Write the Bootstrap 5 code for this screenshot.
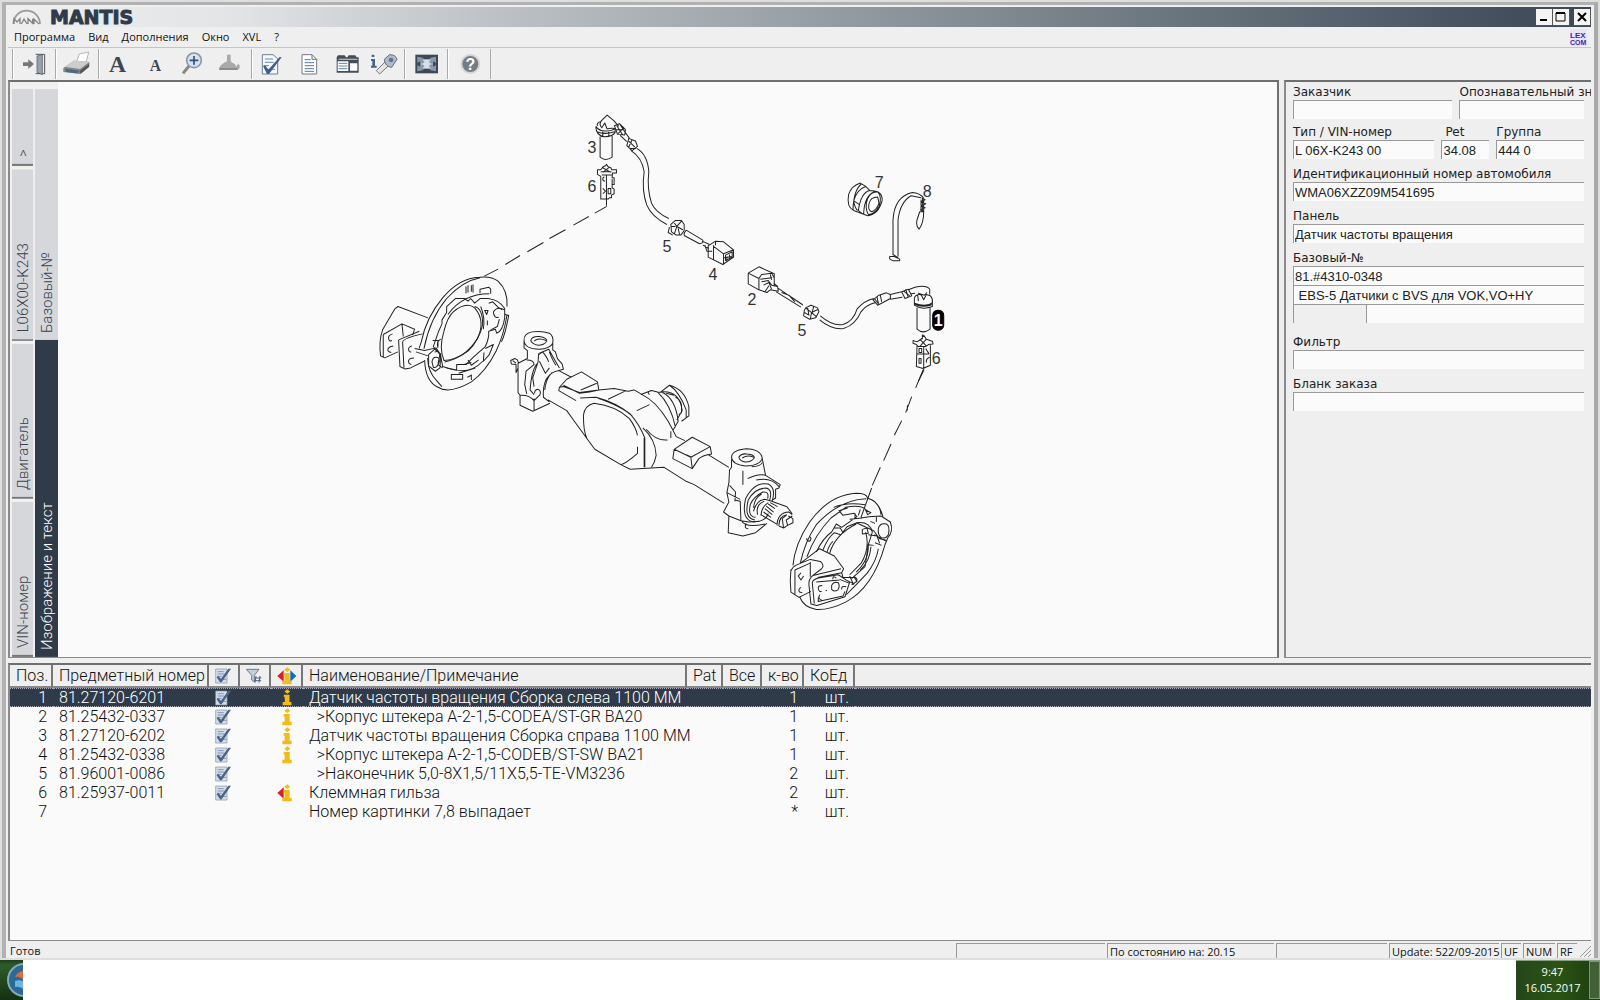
<!DOCTYPE html>
<html lang="ru">
<head>
<meta charset="utf-8">
<meta name="viewport" content="width=device-width, initial-scale=1">
<title>MANTIS</title>
<link href="https://cdn.jsdelivr.net/npm/bootstrap@5.3.0/dist/css/bootstrap.min.css" rel="stylesheet">
<style>
:root{--navy:#2f3b49;--face:#efefef;--paper:#fafafa;--edge:#6f6f6f;--tab:#d6d7db}
body{font-family:"Open Sans","Noto Sans",sans-serif;font-size:11px;line-height:16px;color:#111;background:#fff}
button{border:0;background:none;padding:0;color:inherit}
.app-window{background:var(--face);border:6px solid #b1b1b1;border-top-width:5px;border-right-color:#a9a9a9;border-bottom:0;outline:2px solid #dedede;outline-offset:-2px;padding:2px 3px 0 2px}
.title-strip{height:20px;background:linear-gradient(90deg,#efefef 0,#e2e4e6 14%,#bfc3c7 30%,#98a0a7 50%,#65717b 76%,#3a4754 100%)}
.brand{font:700 19px/20px "DejaVu Sans",sans-serif;color:var(--navy);-webkit-text-stroke:1px var(--navy)}
.win-btn{width:17px;height:17px;background:#f4f4f4;border-right:1px solid #555;border-bottom:1px solid #555}
.menu-strip{height:21px;padding-left:6px;border-bottom:1px solid #c4c4c4}
.menu-strip button{margin-right:13px}
.tool-strip{height:32px;padding:1px 0 0 4px}
.tool-set{border-left:1px solid #aaa;height:30px;box-shadow:inset 1px 0 #fff}
.tool-set:last-child{border-right:1px solid #aaa}
.tool-set button{width:38px;height:30px}
.tool-set.solo button{width:42px}
.tool-set svg{width:28px;height:26px;display:block;margin:auto}
.sunk{border-top:2px solid var(--edge);border-left:2px solid #8a8a8a;border-bottom:1px solid #8a8a8a}
.work{gap:5px;flex:1 1 577px}
.view-pane{background:var(--paper);border-right:2px solid var(--edge)}
.tab-col{padding-top:4px;background:var(--face)}
.tab-col.outer{padding-left:2px;padding-right:2px}
.tab-v{writing-mode:vertical-rl;text-orientation:sideways;transform:rotate(180deg);background:var(--tab);color:#3a414b;font:300 15px/20px Roboto,"Open Sans",sans-serif;text-align:left;padding-top:7px;width:21px;border-top:2px solid #777;border-bottom:3px solid #f2f2f2;min-height:0;white-space:nowrap}
.tab-v.wide{width:23px;border-top:0}
.tab-v.on{background:var(--navy);color:#fff;border:0}
.canvas-pane svg{width:100%;height:100%;display:block}
.info-pane{width:307px;padding-left:7px;padding-right:7px;overflow:hidden}
.info-pane label{display:block;height:18px;line-height:20px;font-family:"DejaVu Sans",sans-serif;font-size:12px;color:#222;white-space:nowrap}
.fld{display:block;width:100%;height:19px;border:0;border-top:1px solid #999;border-left:1px solid #999;background:#fbfbfb;font:13px/17px "Liberation Sans",sans-serif;color:#222;padding:0 1px;border-radius:0}
.gap-s{margin-bottom:3px}.gap-m{margin-bottom:5px}.gap-l{margin-bottom:9px}
.parts{flex:0 0 278px;background:var(--paper);margin-top:5px}
.parts table{width:100%;table-layout:fixed;border-collapse:separate;border-spacing:0;font:300 16px/19px Roboto,"Open Sans",sans-serif;color:#111}
.parts th{height:23px;font-weight:300;background:var(--face);border-right:2px solid #777;border-bottom:2px solid #888;padding:0 0 0 6px;white-space:nowrap;overflow:hidden}
.parts th:last-child{border-right:0}
.parts td{height:19px;padding:0 0 0 6px;white-space:pre}
.parts svg{display:block}
.parts .num{text-align:right;padding-right:6px}
.parts .unit{text-align:right;padding-right:6px}
.parts tr.sel td{background:var(--navy);color:#fff;border-top:1px dotted #aab;border-bottom:1px dotted #aab;line-height:17px}
.status{height:19px;padding-left:2px;gap:2px}
.status-box{height:16px;border-top:1px solid #999;border-left:1px solid #999;padding-left:2px;line-height:15px;white-space:nowrap}
.w-a{width:149px}.w-b{width:167px}.w-c{width:111px}.w-d{width:110px}.w-e{width:20px}.w-f{width:32px}.w-g{width:20px}
.taskbar{height:40px;background:#fff}
.start{width:23px;background:linear-gradient(#1c3c1a,#2f5c2c 12%,#143012);overflow:hidden}
.clock{width:84px;background:linear-gradient(90deg,#24461a,#2b5413 50%,#1b3b12);color:#fff;border-top:1px solid #8aa082}
.clock-text{padding-top:3px}
.peek{width:11px;height:38px;border:1px solid #7d9673;background:#426038}
</style>
<script src="https://cdn.jsdelivr.net/npm/bootstrap@5.3.0/dist/js/bootstrap.bundle.min.js"></script>
</head>
<body class="d-flex flex-column min-vh-100">
<svg width="0" height="0" class="position-absolute" aria-hidden="true">
 <symbol id="chk" viewBox="0 0 48 48"><path d="M2 3h34v42H2z" fill="#d3deea" stroke="#8793a3" stroke-width="2"/><path d="M8 11h18M8 18h20M8 25h12M24 34h10" stroke="#7f96b5" stroke-width="3"/><path d="M9 23l9 9L40 2h8L20 43h-5L5 28z" fill="#4a6488"/></symbol>
 <symbol id="inf" viewBox="0 0 60 54"><path d="M22 8l9-7 9 7-9 7zM20 18h18v23h6v11H16V41h7V26h-3z" fill="#f2bb19"/></symbol>
</svg>
<div class="app-window d-flex flex-column flex-grow-1">
 <header class="title-strip d-flex align-items-center">
  <svg width="30" height="18" viewBox="0 0 90 54" class="ms-1 me-2" fill="none"><path d="M4 48A40 40 0 0 1 84 48" stroke="#999" stroke-width="5"/><path d="M6 48V32l9 10 9-10v16M28 48l8-15 9 15M48 48V32l14 14V32M66 48V33l15 15" stroke="#858585" stroke-width="4"/></svg>
  <span class="brand flex-grow-1">MANTIS</span>
  <button class="win-btn" aria-label="Свернуть"><svg width="15" height="15" class="d-block"><path d="M4 11h7" stroke="#000" stroke-width="2"/></svg></button>
  <button class="win-btn" aria-label="Развернуть"><svg width="15" height="15" class="d-block"><path d="M3 4h9v8H3z" fill="none" stroke="#000"/><path d="M3 4h9" stroke="#000" stroke-width="2"/></svg></button>
  <button class="win-btn ms-1" aria-label="Закрыть"><svg width="15" height="15" class="d-block"><path d="M4 4l8 8M12 4l-8 8" stroke="#000" stroke-width="2"/></svg></button>
 </header>
 <nav class="menu-strip d-flex align-items-center">
  <button>Программа</button><button>Вид</button><button>Дополнения</button><button>Окно</button><button>XVL</button><button>?</button>
  <svg class="ms-auto me-1" width="17" height="17" viewBox="0 0 17 17"><path d="M0 0h17v17H0z" fill="#e8e4f2"/><g font-family="Liberation Sans, sans-serif" font-weight="700" font-size="8" fill="#4a22b8"><text x="0" y="9">LEX</text><text x="0" y="16" font-size="7">COM</text></g></svg>
 </nav>
 <div class="tool-strip d-flex" role="toolbar">
  <div class="tool-set solo"><button aria-label="Выход"><svg viewBox="57 153 84 78"><path d="M104 163h27v58h-27" fill="#e8ebee" stroke="#555" stroke-width="3"/><path d="M108 168l16-4v60l-16-7z" fill="#96a2ae" stroke="#4c545c" stroke-width="2"/><path d="M66 187h16v-9l17 14-17 15v-9H66z" fill="#777"/></svg></button></div>
  <div class="tool-set solo"><button aria-label="Печать"><svg viewBox="183 153 84 78"><path d="M222 190l10-28 28-6-8 32z" fill="#fff" stroke="#999" stroke-width="2"/><path d="M184 204l32-22 46 4v14l-28 22-50-6z" fill="#858585"/><path d="M187 200l30-19 44 6-27 20z" fill="#cdcdcd"/><path d="M190 206l42 6-6 8-34-4z" fill="#4a6a84"/><path d="M234 212l27-20v8l-25 22z" fill="#555"/></svg></button></div>
  <div class="tool-set d-flex">
   <button aria-label="Крупный шрифт"><svg viewBox="309 153 84 78"><text x="350" y="215" text-anchor="middle" font-family="Liberation Serif, serif" font-weight="700" font-size="71" fill="#3c4652">A</text></svg></button>
   <button aria-label="Мелкий шрифт"><svg viewBox="423 153 84 78"><text x="463" y="214" text-anchor="middle" font-family="Liberation Serif, serif" font-weight="700" font-size="47" fill="#3c4652">A</text></svg></button>
   <button aria-label="Увеличить"><svg viewBox="541 153 84 78"><path d="M568 198l-18 22" stroke="#8a8580" stroke-width="9"/><circle cx="583" cy="181" r="22" fill="#d5e4f2" stroke="#8996a5" stroke-width="5"/><path d="M570 181h26M583 168v26" stroke="#335078" stroke-width="5"/></svg></button>
   <button aria-label="Лампа"><svg viewBox="650 153 84 78"><path d="M677 164h11v20q2 4 12 8l6 8q2-10 8-6 4 8-4 16H654q-4-14 23-26z" fill="#aaa"/><path d="M654 207h54" stroke="#8c8c8c" stroke-width="6"/></svg></button>
  </div>
  <div class="tool-set d-flex">
   <button aria-label="Проверка"><svg viewBox="771 153 84 78"><path d="M787 164h32l14 12v46h-46z" fill="#f5f8fc" stroke="#6d7f98" stroke-width="3"/><path d="M795 177h24M795 187h26M795 197h12M795 208h30" stroke="#6e89ad" stroke-width="3"/><path d="M789 198l6-3 10 14 34-38 6 1-38 50h-6z" fill="#405d89"/></svg></button>
   <button aria-label="Документ"><svg viewBox="885 153 84 78"><path d="M906 164h30l14 14v44h-44z" fill="#fff" stroke="#778" stroke-width="3"/><path d="M936 164v14h14M914 179h18M914 188h28M914 197h28M914 206h28M914 214h28" fill="none" stroke="#5d7699" stroke-width="3"/></svg></button>
   <button aria-label="Окна"><svg viewBox="999 153 84 78"><path d="M1010 180v-8l4-6h20l4 6h4l4-6h20l4 6h6v46h-66z" fill="#454d59"/><path d="M1013 184h32v29h-32zM1050 190h22v22h-22z" fill="#fff"/><path d="M1016 178h56" stroke="#a9b4c0" stroke-width="4"/><path d="M1016 190h26M1016 198h26M1016 206h26" stroke="#5b82b5" stroke-width="3"/></svg></button>
   <button aria-label="Поиск сведений"><svg viewBox="1112 153 84 78"><path d="M1114 164h8v7h-8zM1112 177h12v20h5v6h-17v-6h4v-14h-4z" fill="#456488"/><path d="M1128 212l30-30 10 12-30 28z" fill="#e5e5e5" stroke="#777" stroke-width="3"/><path d="M1152 178l16-14q18 0 22 14l-16 24q-20-2-22-24z" fill="#aebccb" stroke="#667" stroke-width="3"/><circle cx="1172" cy="180" r="7" fill="#60758d"/></svg></button>
  </div>
  <div class="tool-set solo"><button aria-label="Во весь экран"><svg viewBox="1236 153 84 78"><path d="M1246 164h68v56h-68z" fill="#3d4956"/><path d="M1262 178h36v28h-36z" fill="#d9e0e8"/><path d="M1252 170l20 4-6 4 8 8-8 6-8-8-6 6zM1308 170l-20 4 6 4-8 8 8 6 8-8 6 6zM1252 214l20-4-6-4 8-8-8-6-8 8-6-6zM1308 214l-20-4 6-4-8-8 8-6 8 8 6-6z" fill="#8799ac"/></svg></button></div>
  <div class="tool-set solo"><button aria-label="Справка"><svg viewBox="1366 153 84 78"><circle cx="1412" cy="192" r="27" fill="#737b84" stroke="#d5d5d5" stroke-width="6"/><text x="1412" y="209" text-anchor="middle" font-family="Liberation Sans, sans-serif" font-weight="700" font-size="48" fill="#fff">?</text></svg></button></div>
 </div>

 <main class="work d-flex">
  <section class="view-pane sunk flex-grow-1 d-flex">
   <div class="tab-col outer d-flex flex-column">
    <button class="tab-v" style="flex:74 1 0">&gt;</button><button class="tab-v" style="flex:178 1 0">L06X00-K243</button><button class="tab-v" style="flex:159 1 0">Двигатель</button><button class="tab-v" style="flex:159 1 0">VIN-номер</button>
   </div>
   <div class="tab-col d-flex flex-column">
    <button class="tab-v wide" style="flex:252 1 0">Базовый-№</button><button class="tab-v wide on" style="flex:320 1 0">Изображение и текст</button>
   </div>
   <div class="canvas-pane flex-grow-1">
   <svg viewBox="59 81 1218 574" preserveAspectRatio="xMinYMin meet" fill="none" stroke="#222" stroke-linejoin="round" role="img" aria-label="Датчик частоты вращения">
    <!-- sensor 3, cable, connector 4, left brake plate -->
    <g transform="translate(370 100) scale(.33333)" stroke-width="3">
     <path d="M679 76Q680 106 706 107Q730 106 737 94V82M679 76Q690 91 708 90Q728 90 737 82M682 92Q706 102 735 92M684 75Q680 66 694 61L713 42L733 59L748 76M695 61Q688 70 697 80L706 66L713 84M713 84Q722 80 735 82M700 92v12M718 92v12"/>
     <path d="M692 106V168Q708 182 728 168V104"/>
     <path d="M735 74L750 68L768 86L766 102L744 100ZM742 74L760 102M752 70L768 96M746 98l18-20M738 86h22M766 92L780 112M752 103L772 122M778 112L798 120L804 136L788 149L772 134ZM778 120l18 18M788 116l-10 22M780 142h20"/>
     <path d="M802 142Q834 160 838 212Q832 262 846 306Q858 334 898 352M784 148Q818 170 824 212Q816 268 832 312Q846 346 892 370"/>
     <path d="M684 206h10l6-8 8-4 3-4 4 6 9 4 3 6h14v10h-12l-1 14h6v20h-6v10l6 4v14l-8 4v8h-6l-4 4h-22v-68l-10-6zM694 212h32M700 200l24 14M700 214l20-16M711 222V314M705 228a6 6 0 1 0 2 12M728 234v24M700 262l8 8-8 8M716 262h8v16h-8zM697 222h30"/>
     <path d="M712 316L676 336M658 346L612 372M588 386L540 412M522 424L474 452M452 463L408 490M386 504L345 525"/>
     <path d="M904 370l14-12h18l8 12v18l-10 14h-14l-14-10zM900 378l-4 16 14 8M912 362l10 14 14-16M922 376l18 10M922 376l-8 24M904 376h14M930 400l-4-18"/>
     <path d="M950 387L1000 417M944 403L990 428M950 387q-8 8-6 16M1000 417q2 10-10 11M998 420l22 10M1000 432l18 10M1006 432l6 18h16"/>
     <path d="M1016 434L1038 420 1062 422 1092 446V468L1060 490 1016 468ZM1032 436L1062 458 1092 446M1062 458V488M1032 432V474M1038 420v12M1068 462l20-10v16l-20 10zM1072 466v14M1080 460v14M1062 470l26-4"/>
     <path d="M413 616Q416 568 386 540Q366 524 330 528Q270 530 220 590Q170 650 156 722Q150 738 150 742M399 626L389 620M413 640Q404 700 380 750Q350 810 306 842Q240 880 206 858Q168 840 166 776M406 640L418 642Q408 700 396 722M332 530Q280 540 232 592Q182 652 164 742M175 770Q176 812 202 838Q212 850 218 856"/>
     <path d="M232 634V616L258 592H286L296 600 304 592 316 606 332 592H356Q390 596 406 622V650Q400 690 382 696L378 684 358 690Q360 710 348 736L312 768 290 790H262V806Q240 804 220 796L214 762 192 736 208 690 218 668V656ZM236 640Q280 578 360 578M252 632Q290 600 316 620Q350 660 324 712Q286 774 224 778Q208 740 224 690Q234 648 252 632Z"/>
     <path d="M316 616Q340 622 340 670Q330 716 296 750Q260 776 226 782M334 616Q348 650 342 684M290 556v20M296 552v22M306 552v20M311 550v24M332 576v-12l26-6 6 6v14M358 606l12-4 18 18M372 632q12-18 34-6M372 632q2 20 16 16M346 628h10l-4 12zM354 658v14M390 654l-6 22-20 10M348 742l24-12-12 30-18 20 2-26M296 776l10 16 22-16M284 790l22-6M232 800Q300 824 340 780M246 820h34v14h-34zM294 828l12-6v14M306 820v14M268 816l50-16"/>
     <path d="M176 650L86 616 76 624 40 686Q28 720 34 764L46 770 86 752M42 700L98 668 136 684 130 702M98 668L102 706M42 700V768M70 698q-14 4-12 14t10 6M72 734q-14 2-16 10t10 10M88 716L150 690M88 716L92 796 106 803 124 800 164 780M100 722Q104 710 160 698M100 722L104 800M128 734q-12 4-10 12t8 6M134 770q-14 0-16 8t8 12M136 742L166 748 200 740 212 758 206 790 220 800M206 740Q200 720 214 714M190 718h16v18M178 760l18-16 18 14-2 42-14 10-20-16zM188 782q2-16 14-14t6 18-16 12zM196 752l10-2M140 752L176 764"/>
    </g>
    <!-- parts 7, 8, connector 2, cable and sensor 1 -->
    <g transform="translate(740 160) scale(.33333)" stroke-width="3">
     <path d="M362 66Q336 74 327 100Q320 138 342 148L384 164Q416 160 427 120Q430 100 414 92L404 90 390 88 378 76ZM366 68Q342 86 340 146M378 76Q350 86 342 120 346 142 354 148M390 88Q364 94 356 148L366 156M404 92Q374 104 372 158M414 92Q428 108 418 136Q404 160 386 160Q374 140 384 112Q394 92 414 92M414 108Q392 108 388 128Q384 148 396 152Q410 148 418 126ZM344 120l14 10"/>
     <path d="M460 282V176Q464 106 518 94Q540 96 552 110M475 286V176Q482 122 514 104L544 110M450 286h14l16 8v5h-20l-10-6zM460 280l16 10M546 110l10 6-12 6 14 6-14 6 12 6-14 6 10 4M544 116v34M552 112v42M548 112v40M540 152h12Q552 186 538 204Q528 196 532 176Z"/>
     <path d="M26 336L58 317 104 338V356M26 336V368L58 386V352L26 336M58 352L66 340 96 336 104 350V372M58 386L82 394 92 386 116 390 114 376 102 366M66 362l20-4 10 14 18 4M72 372l16-8 8 20M62 354l36-4M76 392l12-18M92 340l4 16M114 380L190 432M110 392L184 438M126 394l22 8 18 20M150 404l38 26"/>
     <path d="M198 440L214 432 234 440 238 452 228 470 210 474 192 464 194 448ZM198 440l18 14 20-10M216 454l-4 20M194 454l14 8-4-22M216 454l16 14M222 436l-4 16"/>
     <path d="M242 464Q280 496 310 490Q342 480 352 444Q374 418 402 412M240 476Q276 506 312 502Q348 490 364 452Q378 432 408 424M400 416L418 402 440 395 452 400V412L430 424 414 432ZM412 408l4 18M422 402l4 20M404 412l14 18M452 400L486 392M452 414L488 408M486 392L506 384 516 404 496 412ZM498 384l8 26M492 390l18 14M506 386L526 378Q560 370 570 384V400M514 398L526 396"/>
     <path d="M524 412Q526 398 544 400L552 416 560 400 572 404Q580 412 578 424Q560 440 524 426ZM534 402l2 18M544 402l-8-6 18 6 8-8M524 428Q546 442 578 430M524 414V432Q546 448 578 436V420M532 440V504Q550 520 571 504V440"/>
     <path d="M520 538L532 542 544 534 552 522 560 534 578 540 580 548 566 550 558 556H536L530 550 520 546ZM532 552L530 616 550 622 572 612V552M540 534l20 20M560 534l-20 22M552 556V628L536 660M538 562h8v12h-8zM558 562l10 16M538 592h6v14h-6zM570 588q-12 4-10 16M532 578h36M548 520v14"/>
    </g>
    <!-- axle beam -->
    <g transform="translate(500 320) scale(.33333)" stroke-width="3">
     <path d="M74 58Q72 38 98 32Q128 28 150 36Q164 46 160 66Q152 82 120 84Q76 84 74 58ZM94 58Q98 44 120 46Q144 50 142 60Q134 72 116 72Q100 70 94 58ZM104 60Q116 48 140 58M74 60V80L84 88V112L56 126V214L62 222V252L100 270 152 246M160 64V86L168 92L174 112 188 128 192 144 178 148M56 140L50 154 50 130 36 128 34 118 46 112 54 116 58 126M40 118l10 8M82 116Q104 116 104 130L80 150 76 190 82 218M112 128Q96 150 92 206L104 220M118 96L116 122 100 170 104 196M120 96L148 84 166 116 180 140M130 92Q144 110 148 122M150 92Q160 120 170 132M118 100L130 92M120 120L138 156 150 140M104 232V266M62 222Q90 220 104 238L122 220Q126 206 114 204Q104 208 106 216"/>
     <path d="M150 242L132 228Q128 158 178 148L216 168M136 206Q140 170 158 154M146 236L202 268 222 296 286 384 364 430 392 444 494 438 560 480 584 490 674 546M180 198L202 174 246 152 294 182 298 206 240 214 192 196ZM180 198L178 208 230 238M298 206L270 212 240 216 192 192M292 186L244 206M298 206L344 202 386 210 404 206 428 220M242 230L290 228Q350 244 392 278Q420 310 436 350V438M294 230Q370 256 400 286M326 234L380 208M252 282Q256 252 284 246Q350 254 390 292Q410 320 414 342M252 282Q252 330 262 350M364 430Q380 426 414 396V376M434 350V438M440 324Q470 360 504 356M430 320Q468 354 470 402Q466 424 456 438M412 268L450 250M428 220Q470 240 506 300L520 326M424 220L456 208 474 212Q514 250 528 318M456 208Q440 212 450 220M484 212L510 192Q556 204 568 256V284L546 300M474 214L486 212Q528 230 536 300L520 328M484 212Q540 206 548 268L532 296M510 192Q540 212 560 266V288M528 228Q540 232 546 250V274L538 280M500 216L524 222M514 330V350M520 326L530 346 556 358"/>
     <path d="M524 384L578 348 632 376 636 398Q610 402 598 412L578 442 520 412ZM524 384L574 408 632 376M574 408L578 440M560 400l16 8M626 400L688 438"/>
     <path d="M696 408Q696 386 740 382Q784 384 788 410Q784 432 738 434Q698 430 696 408ZM718 408Q724 396 742 398Q766 400 764 410Q756 422 738 422Q722 420 718 408ZM728 410Q744 400 762 408M696 414V438L690 446 688 484 682 514 722 534M788 412L798 462 842 490 838 500 828 504V530L816 538M730 448V490M744 472Q776 456 798 462M756 436q26 0 32-12M690 492L708 512 706 540M682 514L688 542 672 572 688 584M706 536L722 540 724 598M724 598L688 584 686 634 730 644 768 634 802 606M726 598Q736 620 796 608M724 598L748 602 780 600M740 606q-8 16 6 16"/>
     <path d="M818 538Q830 500 806 488Q764 480 738 532Q724 596 762 602Q800 600 806 576M810 538Q820 504 800 500Q766 500 746 536Q732 590 766 596M804 532Q810 510 790 512Q762 526 752 550Q744 586 768 588M770 476Q816 466 838 496M786 518Q764 530 762 560M762 570Q770 536 796 534L816 540M774 580Q768 548 794 540M784 582Q786 556 806 544"/>
     <path d="M816 540L862 556 878 578M784 580L838 612M806 548L826 562M800 554L822 572M796 562L818 580M792 572L814 588M812 544L834 556M832 612Q834 574 868 572L878 580M838 612Q838 584 862 580M838 614L852 620 864 612 880 604V592L866 584M852 620L848 592 862 580M864 612L860 596 878 584"/>
    </g>
    <!-- right brake plate -->
    <g transform="translate(740 360) scale(.33333)" stroke-width="3">
     <path d="M550 26L528 80M516 106L498 154M486 178L464 222M454 248L432 298M422 318L398 372M396 380L364 468M503 132v16"/>
     <path d="M160 612Q166 548 210 482Q270 400 350 396Q380 396 384 410M182 606Q196 540 230 490Q300 414 380 412M382 410Q420 420 424 460M398 416Q420 430 430 466M202 586Q226 520 274 470L318 438Q370 428 382 450M230 572Q250 530 276 512L290 488 306 498 352 466 344 456 310 462 298 448 324 440M250 566Q264 530 284 514L304 520 322 496 352 484Q390 480 398 512L386 550 376 616 336 652M284 500h18l8 14M282 438Q320 422 376 430M270 576Q286 520 350 488M378 512Q392 560 364 606L330 640M262 572Q270 548 280 540M202 530a6 7 0 1 0 8-4M366 470L330 474M356 462L362 444M346 456V470"/>
     <path d="M424 464L452 482Q462 510 444 530L436 550Q400 680 318 722Q270 746 230 744Q192 738 180 706M416 502Q420 484 440 488Q452 494 446 520Q438 534 424 528Q414 520 416 502ZM364 470L388 466 424 464M350 484L402 508 420 532 438 536M368 504l14-4 4 16-18 2zM378 446l6 14 10-6zM392 480l14 6M410 466v16M386 520L412 524 420 546M416 562Q410 600 382 636Q350 670 320 700M394 556Q390 600 362 626M386 550l16 2M406 544l20 8M404 520L440 540M384 548Q392 590 350 632"/>
     <path d="M154 624Q150 660 154 692L178 708 214 690M160 618Q166 612 182 606L212 594 242 600Q256 612 246 622L220 642M166 626L210 606M166 626V700M154 628L160 618M182 606L240 562 284 584 312 622 306 634 234 648M212 602V646M220 642Q206 654 208 670L214 728 232 732 316 706M220 642L304 622M218 664Q218 656 236 650L296 640L320 656 330 662 316 706M218 664L224 726M230 662L300 656M236 708V720L310 704 316 690M184 634l-8 10 8 12 8-12M184 678q-10 6-4 14l8 2M248 672q-14 0-12 10t10 8M240 700q-6 12 6 16M276 672q6-14 20-8 6 12-2 22-12 6-18-2zM258 686l4 2M320 676q-16-4-14 8M290 650q-12-10-10 4M306 634L310 648 344 648 352 660 336 670M330 644l12 26M344 646q14 8 4 16M320 656L344 668M300 654l30 12"/>
    </g>
    <rect x="933" y="309" width="11" height="20" rx="5" fill="#000" stroke="#000"/>
    <g font-family="Liberation Sans, sans-serif" font-size="16" fill="#333" stroke="none">
     <text x="588" y="152">3</text><text x="588" y="191">6</text><text x="663" y="251">5</text><text x="709" y="279">4</text><text x="748" y="304">2</text><text x="798" y="335">5</text><text x="875" y="187">7</text><text x="923" y="196">8</text><text x="932" y="363">6</text><text x="934" y="325" fill="#fff" font-weight="700">1</text>
    </g>
   </svg>
   </div>
  </section>
  <aside class="info-pane sunk flex-shrink-0">
   <div class="d-flex gap-s">
    <div style="flex:160 1 0;min-width:0;margin-right:7px"><label for="f1">Заказчик</label><input id="f1" class="fld"></div>
    <div style="flex:125 1 0;min-width:0"><label for="f2">Опознавательный знак</label><input id="f2" class="fld"></div>
   </div>
   <div class="d-flex gap-m">
    <div style="flex:142 1 0;min-width:0;margin-right:7px"><label for="f3">Тип / VIN-номер</label><input id="f3" class="fld" value="L 06X-K243 00"></div>
    <div style="flex:48 1 0;min-width:0;margin-right:7px"><label for="f4" class="ps-1">Pet</label><input id="f4" class="fld" value="34.08"></div>
    <div style="flex:88 1 0;min-width:0"><label for="f5">Группа</label><input id="f5" class="fld" value="444 0"></div>
   </div>
   <div class="gap-m"><label for="f6">Идентификационный номер автомобиля</label><input id="f6" class="fld" value="WMA06XZZ09M541695"></div>
   <div class="gap-m"><label for="f7">Панель</label><input id="f7" class="fld" value="Датчик частоты вращения"></div>
   <div class="gap-l"><label for="f8">Базовый-№</label><input id="f8" class="fld" value="81.#4310-0348"><input class="fld" aria-label="Описание" value=" EBS-5 Датчики с BVS для VOK,VO+HY">
    <div class="d-flex"><input class="fld w-25 bg-transparent" aria-label="Код"><input class="fld w-75" aria-label="Дополнение"></div></div>
   <div class="gap-m"><label for="f9">Фильтр</label><input id="f9" class="fld"></div>
   <div><label for="f10">Бланк заказа</label><input id="f10" class="fld"></div>
  </aside>
 </main>

 <section class="parts sunk">
  <table>
   <colgroup><col style="width:43px"><col style="width:156px"><col style="width:31px"><col style="width:31px"><col style="width:32px"><col style="width:384px"><col style="width:36px"><col style="width:39px"><col style="width:42px"><col style="width:51px"><col></colgroup>
   <thead><tr><th>Поз.</th><th>Предметный номер</th><th><svg width="16" height="16"><use href="#chk"/></svg></th><th><svg width="16" height="16" viewBox="0 0 48 48"><path d="M1 4h38L25 22v20l-8-6V22z" fill="#c3cedb" stroke="#6b7d92" stroke-width="3"/><path d="M30 24l-3 20M42 24l-3 20M26 30h20M25 38h20" stroke="#4d617a" stroke-width="3"/></svg></th><th><svg width="20" height="18" viewBox="0 0 60 54"><path d="M20 10v34L1 27z" fill="#e01c24"/><path d="M40 10v34l18-17z" fill="#1769b5"/><use href="#inf"/></svg></th><th>Наименование/Примечание</th><th>Pat</th><th>Все</th><th>к-во</th><th>КоЕд</th><th></th></tr></thead>
   <tbody>
    <tr class="sel"><td class="num">1</td><td>81.27120-6201</td><td><svg width="16" height="16"><use href="#chk"/></svg></td><td></td><td><svg width="20" height="17"><use href="#inf"/></svg></td><td>Датчик частоты вращения Сборка слева 1100 ММ</td><td></td><td></td><td class="num">1</td><td class="unit">шт.</td><td></td></tr>
    <tr><td class="num">2</td><td>81.25432-0337</td><td><svg width="16" height="16"><use href="#chk"/></svg></td><td></td><td><svg width="20" height="18"><use href="#inf"/></svg></td><td>  &gt;Корпус штекера A-2-1,5-CODEA/ST-GR BA20</td><td></td><td></td><td class="num">1</td><td class="unit">шт.</td><td></td></tr>
    <tr><td class="num">3</td><td>81.27120-6202</td><td><svg width="16" height="16"><use href="#chk"/></svg></td><td></td><td><svg width="20" height="18"><use href="#inf"/></svg></td><td>Датчик частоты вращения Сборка справа 1100 ММ</td><td></td><td></td><td class="num">1</td><td class="unit">шт.</td><td></td></tr>
    <tr><td class="num">4</td><td>81.25432-0338</td><td><svg width="16" height="16"><use href="#chk"/></svg></td><td></td><td><svg width="20" height="18"><use href="#inf"/></svg></td><td>  &gt;Корпус штекера A-2-1,5-CODEB/ST-SW BA21</td><td></td><td></td><td class="num">1</td><td class="unit">шт.</td><td></td></tr>
    <tr><td class="num">5</td><td>81.96001-0086</td><td><svg width="16" height="16"><use href="#chk"/></svg></td><td></td><td></td><td>  &gt;Наконечник 5,0-8X1,5/11X5,5-TE-VM3236</td><td></td><td></td><td class="num">2</td><td class="unit">шт.</td><td></td></tr>
    <tr><td class="num">6</td><td>81.25937-0011</td><td><svg width="16" height="16"><use href="#chk"/></svg></td><td></td><td><svg width="20" height="18" viewBox="0 0 60 54"><path d="M20 10v34L1 27z" fill="#e01c24"/><use href="#inf"/></svg></td><td>Клеммная гильза</td><td></td><td></td><td class="num">2</td><td class="unit">шт.</td><td></td></tr>
    <tr><td class="num">7</td><td></td><td></td><td></td><td></td><td>Номер картинки 7,8 выпадает</td><td></td><td></td><td class="num">*</td><td class="unit">шт.</td><td></td></tr>
   </tbody>
  </table>
 </section>

 <footer class="status d-flex align-items-center">
  <span class="me-auto">Готов</span>
  <span class="status-box w-a"></span><span class="status-box w-b">По состоянию на: 20.15</span><span class="status-box w-c"></span><span class="status-box w-d">Update: 522/09-2015</span><span class="status-box w-e">UF</span><span class="status-box w-f">NUM</span><span class="status-box w-g">RF</span>
  <svg width="12" height="14" viewBox="0 0 12 14"><path d="M1 13L12 2M5 13l7-7M9 13l3-3" stroke="#999"/></svg>
 </footer>
</div>
<div class="taskbar d-flex justify-content-between">
 <button class="start" aria-label="Пуск"><svg width="23" height="40" class="d-block"><circle cx="24" cy="20" r="16" fill="#2b6996" stroke="#86a9b8" stroke-width="2"/><path d="M15 17q4-7 9-5v8q-5-4-9-3z" fill="#e2693b"/><path d="M15 21q5-2 9 1v8q-4-4-9-3z" fill="#69b6e2"/></svg></button>
 <div class="clock d-flex"><div class="clock-text text-center flex-grow-1">9:47<br>16.05.2017</div><div class="peek"></div></div>
</div>
</body>
</html>
